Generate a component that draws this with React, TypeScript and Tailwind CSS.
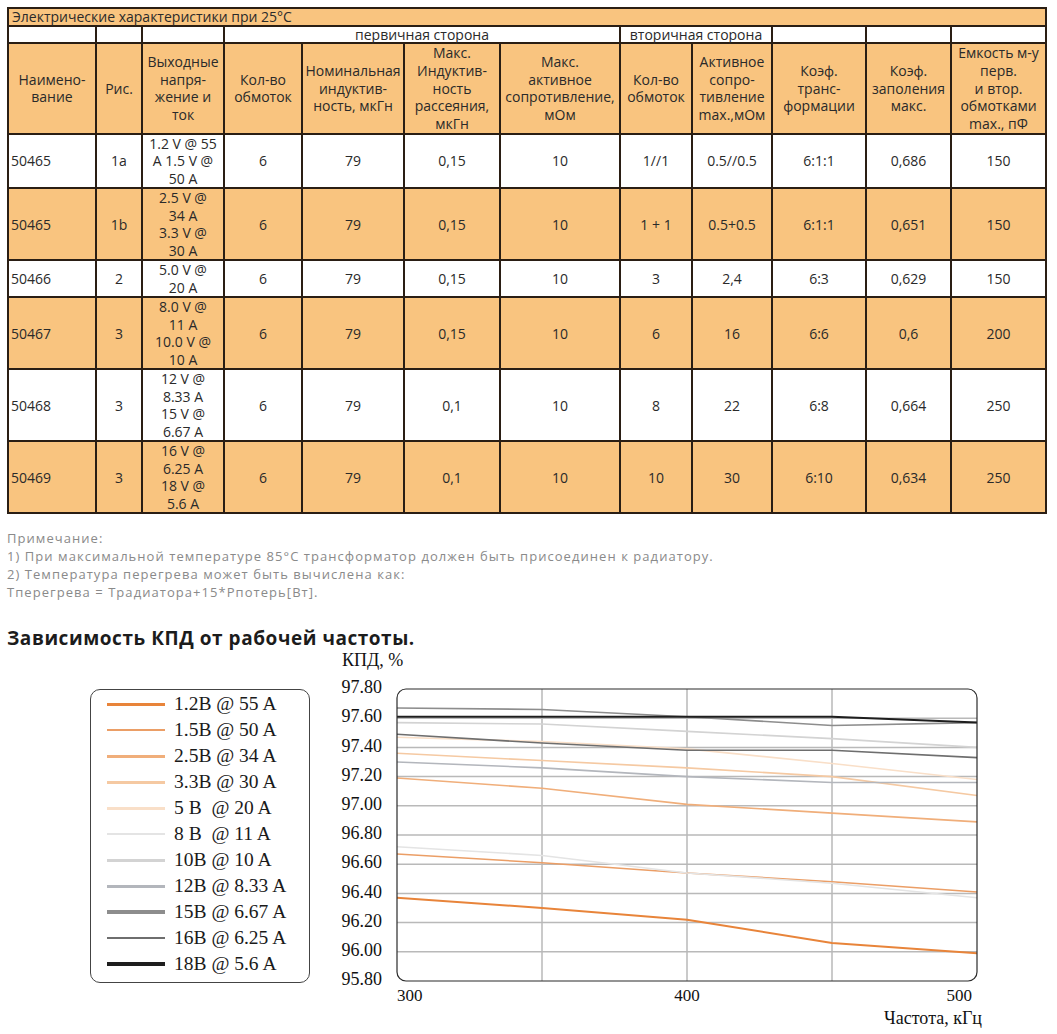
import React from "react"

type Row = {
  name: string
  fig: string
  out: string[]
  n1: string
  l: string
  ls: string
  r1: string
  n2: string
  r2: string
  k: string
  fill: string
  c: string
  orange: boolean
}

const rows: Row[] = [
  { name: "50465", fig: "1a", out: ["1.2 V @ 55", "A 1.5 V @", "50 A"], n1: "6", l: "79", ls: "0,15", r1: "10", n2: "1//1", r2: "0.5//0.5", k: "6:1:1", fill: "0,686", c: "150", orange: false },
  { name: "50465", fig: "1b", out: ["2.5 V @", "34 A", "3.3 V @", "30 A"], n1: "6", l: "79", ls: "0,15", r1: "10", n2: "1 + 1", r2: "0.5+0.5", k: "6:1:1", fill: "0,651", c: "150", orange: true },
  { name: "50466", fig: "2", out: ["5.0 V @", "20 A"], n1: "6", l: "79", ls: "0,15", r1: "10", n2: "3", r2: "2,4", k: "6:3", fill: "0,629", c: "150", orange: false },
  { name: "50467", fig: "3", out: ["8.0 V @", "11 A", "10.0 V @", "10 A"], n1: "6", l: "79", ls: "0,15", r1: "10", n2: "6", r2: "16", k: "6:6", fill: "0,6", c: "200", orange: true },
  { name: "50468", fig: "3", out: ["12 V @", "8.33 A", "15 V @", "6.67 A"], n1: "6", l: "79", ls: "0,1", r1: "10", n2: "8", r2: "22", k: "6:8", fill: "0,664", c: "250", orange: false },
  { name: "50469", fig: "3", out: ["16 V @", "6.25 A", "18 V @", "5.6 A"], n1: "6", l: "79", ls: "0,1", r1: "10", n2: "10", r2: "30", k: "6:10", fill: "0,634", c: "250", orange: true },
]

const headers: string[][] = [
  ["Наимено-", "вание"],
  ["Рис."],
  ["Выходные", "напря-", "жение и", "ток"],
  ["Кол-во", "обмоток"],
  ["Номинальная", "индуктив-", "ность, мкГн"],
  ["Макс.", "Индуктив-", "ность", "рассеяния,", "мкГн"],
  ["Макс.", "активное", "сопротивление,", "мОм"],
  ["Кол-во", "обмоток"],
  ["Активное", "сопро-", "тивление", "max.,мОм"],
  ["Коэф.", "транс-", "формации"],
  ["Коэф.", "заполения", "макс."],
  ["Емкость м-у", "перв.", "и втор.", "обмотками", "max., пФ"],
]

const widths = [88, 46, 82, 78, 102, 96, 120, 72, 80, 94, 85, 95]

type Series = { label: string; color: string; legendW: number; plotW: number; v: number[] }

// значения КПД при 300, 350, 400, 450, 500 кГц
const series: Series[] = [
  { label: "1.2B @ 55 A", color: "#e8843a", legendW: 3, plotW: 2, v: [96.37, 96.3, 96.22, 96.06, 95.99] },
  { label: "1.5B @ 50 A", color: "#eb9e66", legendW: 2, plotW: 1.6, v: [96.67, 96.61, 96.54, 96.48, 96.41] },
  { label: "2.5B @ 34 A", color: "#f0ae7a", legendW: 3, plotW: 1.6, v: [97.19, 97.12, 97.01, 96.95, 96.89] },
  { label: "3.3B @ 30 A", color: "#f5c9a2", legendW: 2.5, plotW: 1.6, v: [97.36, 97.31, 97.26, 97.2, 97.07] },
  { label: "5 B  @ 20 A", color: "#f9dfc8", legendW: 3, plotW: 1.6, v: [97.47, 97.44, 97.39, 97.29, 97.18] },
  { label: "8 B  @ 11 A", color: "#e4e4e4", legendW: 2, plotW: 1.6, v: [96.72, 96.66, 96.54, 96.47, 96.37] },
  { label: "10B @ 10 A", color: "#d3d3d3", legendW: 3, plotW: 1.6, v: [97.57, 97.56, 97.51, 97.46, 97.4] },
  { label: "12B @ 8.33 A", color: "#b3b6bc", legendW: 3, plotW: 1.6, v: [97.3, 97.26, 97.2, 97.16, 97.16] },
  { label: "15B @ 6.67 A", color: "#8d8d8d", legendW: 4, plotW: 1.6, v: [97.67, 97.66, 97.61, 97.55, 97.57] },
  { label: "16B @ 6.25 A", color: "#6e6e6e", legendW: 2, plotW: 1.6, v: [97.49, 97.43, 97.38, 97.38, 97.33] },
  { label: "18B @ 5.6 A", color: "#1e1e1e", legendW: 4, plotW: 2, v: [97.61, 97.61, 97.61, 97.61, 97.57] },
]

const X = (f: number) => 67 + (f - 300) * 2.9
const Y = (v: number) => 40 + (97.8 - v) * 146

const cell = "border-2 border-[#2a1e14] p-0 text-center align-middle"

function Chart() {
  const yTicks = [97.8, 97.6, 97.4, 97.2, 97.0, 96.8, 96.6, 96.4, 96.2, 96.0, 95.8]
  return (
    <svg width={727} height={386} className="block" style={{ fontFamily: '"Liberation Serif", serif' }}>
      <text x={12} y={13} dominantBaseline="middle" fontSize={18} fill="#111">КПД, %</text>
      {yTicks.map((t) => (
        <text key={t} x={52} y={Y(t)} textAnchor="end" dominantBaseline="middle" fontSize={18} fill="#111">
          {t.toFixed(2)}
        </text>
      ))}
      {yTicks.slice(1, -1).map((t) => (
        <line key={t} x1={67} x2={647} y1={Y(t)} y2={Y(t)} stroke="#b9b9b9" strokeWidth={1.5} />
      ))}
      {[350, 400, 450].map((f) => (
        <line key={f} x1={X(f)} x2={X(f)} y1={40} y2={332} stroke="#b9b9b9" strokeWidth={1.5} />
      ))}
      {series.map((s) => (
        <polyline
          key={s.label}
          fill="none"
          stroke={s.color}
          strokeWidth={s.plotW}
          strokeLinejoin="round"
          points={s.v.map((v, i) => `${X(300 + i * 50)},${Y(v)}`).join(" ")}
        />
      ))}
      <rect x={67} y={40} width={580} height={292} rx={9} fill="none" stroke="#2b2b2b" strokeWidth={1.2} />
      <text x={67} y={348} dominantBaseline="middle" fontSize={17} fill="#111">300</text>
      <text x={X(400)} y={348} textAnchor="middle" dominantBaseline="middle" fontSize={17} fill="#111">400</text>
      <text x={642} y={348} textAnchor="end" dominantBaseline="middle" fontSize={17} fill="#111">500</text>
      <text x={652} y={371} textAnchor="end" dominantBaseline="middle" fontSize={18} fill="#111">Частота, кГц</text>
    </svg>
  )
}

export default function App() {
  return (
    <div className="w-[1057px] min-h-[1034px] bg-white pl-[7px] pt-[7px] text-[#2a2a2a]" style={{ fontFamily: '"Open Sans", sans-serif' }}>
      <table className="w-[1040px] table-fixed border-collapse text-[14px]">
        <colgroup>
          {widths.map((w, i) => (
            <col key={i} style={{ width: w }} />
          ))}
        </colgroup>
        <tbody>
          <tr>
            <td colSpan={12} className="border-2 border-[#2a1e14] bg-[#f9c47f] px-[3px] py-0 text-left leading-[16px]">
              Электрические характеристики при 25°C
            </td>
          </tr>
          <tr className="leading-[15px]">
            <td className={cell}></td>
            <td className={cell}></td>
            <td className={cell}></td>
            <td colSpan={4} className={cell}>первичная сторона</td>
            <td colSpan={2} className={cell}>вторичная сторона</td>
            <td className={cell}></td>
            <td className={cell}></td>
            <td className={cell}></td>
          </tr>
          <tr className="bg-[#f9c47f] leading-[17.8px]">
            {headers.map((h, i) => (
              <td key={i} className={`${cell} whitespace-nowrap`}>
                {h.map((line, j) => (
                  <div key={j}>{line}</div>
                ))}
              </td>
            ))}
          </tr>
          {rows.map((r, i) => (
            <tr key={i} className={`leading-[17.5px] ${r.orange ? "bg-[#f9c47f]" : "bg-white"}`}>
              <td className={`${cell} !text-left pl-[2px]`}>{r.name}</td>
              <td className={cell}>{r.fig}</td>
              <td className={`${cell} whitespace-nowrap`}>
                {r.out.map((line, j) => (
                  <div key={j}>{line}</div>
                ))}
              </td>
              <td className={cell}>{r.n1}</td>
              <td className={cell}>{r.l}</td>
              <td className={cell}>{r.ls}</td>
              <td className={cell}>{r.r1}</td>
              <td className={cell}>{r.n2}</td>
              <td className={cell}>{r.r2}</td>
              <td className={cell}>{r.k}</td>
              <td className={cell}>{r.fill}</td>
              <td className={cell}>{r.c}</td>
            </tr>
          ))}
        </tbody>
      </table>

      <div className="mt-[15px] text-[13px] leading-[18px] tracking-[1.05px] text-[#8a8a8a]">
        <p>Примечание:</p>
        <p>1) При максимальной температуре 85°C трансформатор должен быть присоединен к радиатору.</p>
        <p>2) Температура перегрева может быть вычислена как:</p>
        <p>Тперегрева = Традиатора+15*Рпотерь[Вт].</p>
      </div>

      <h2 className="mt-[26px] text-[19px] font-bold leading-[22px] tracking-[0.55px] text-[#1c1c1c]">
        Зависимость КПД от рабочей частоты.
      </h2>

      <div className="flex">
        <div
          className="ml-[83px] mt-[40px] h-[294px] w-[220px] rounded-[10px] border border-[#444] pt-[1px]"
          style={{ fontFamily: '"Liberation Serif", serif' }}
        >
          {series.map((s) => (
            <div key={s.label} className="flex h-[26px] items-center">
              <div className="ml-[16px] w-[58px]" style={{ height: s.legendW, background: s.color }} />
              <span className="ml-[9px] whitespace-pre text-[19.5px] leading-[26px] text-[#1a1a1a]">{s.label}</span>
            </div>
          ))}
        </div>
        <div className="ml-[20px]">
          <Chart />
        </div>
      </div>
    </div>
  )
}
